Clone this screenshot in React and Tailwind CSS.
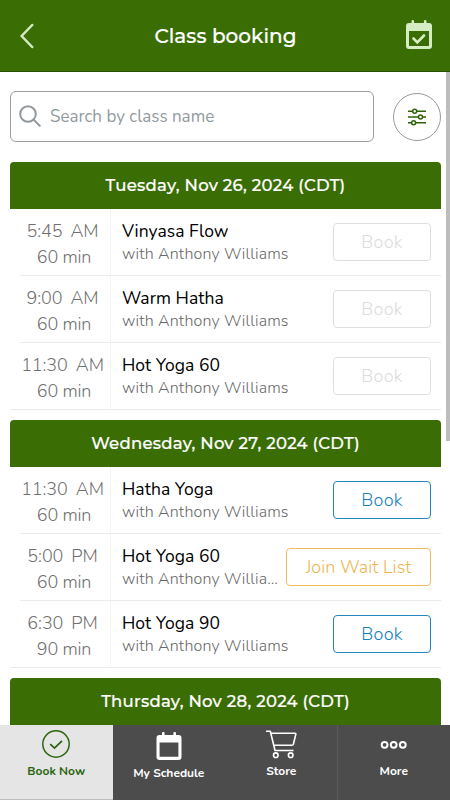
import React from "react";
import clsx from "clsx";

const days = [
  {
    date: "Tuesday, Nov 26, 2024 (CDT)",
    classes: [
      { time: "5:45", period: "AM", length: "60 min", name: "Vinyasa Flow", status: "closed" },
      { time: "9:00", period: "AM", length: "60 min", name: "Warm Hatha", status: "closed" },
      { time: "11:30", period: "AM", length: "60 min", name: "Hot Yoga 60", status: "closed" },
    ],
  },
  {
    date: "Wednesday, Nov 27, 2024 (CDT)",
    classes: [
      { time: "11:30", period: "AM", length: "60 min", name: "Hatha Yoga", status: "open" },
      { time: "5:00", period: "PM", length: "60 min", name: "Hot Yoga 60", status: "full" },
      { time: "6:30", period: "PM", length: "90 min", name: "Hot Yoga 90", status: "open" },
    ],
  },
  { date: "Thursday, Nov 28, 2024 (CDT)", classes: [] },
];

const buttonStyles = {
  closed: "w-[98px] border-[#dedede] text-[#dcdcdc]",
  open: "w-[98px] border-[#2187bd] text-[#1580bd]",
  full: "w-[145px] border-[#efbd62] text-[#edb552]",
};

const Header = () => {
  return (
    <header className="flex h-[72px] shrink-0 items-center justify-between border-b border-[#285000] bg-[#3a6e04] pl-5 pr-[18px] text-[#d6edc4]">
      <svg width="15" height="26" viewBox="0 0 15 26" fill="none" stroke="currentColor" strokeWidth="2.5" strokeLinecap="round" strokeLinejoin="round">
        <path d="M12.2 2 1.600 13l10.600 11" />
      </svg>
      <h1 className="ml-[10px] whitespace-nowrap font-['Montserrat','Inter',sans-serif] text-[20px] font-medium tracking-[0.05px] text-white [-webkit-text-stroke:0.2px_white]">
        Class booking
      </h1>
      <svg className="-mt-0.5" width="26" height="30" viewBox="0 0 26 30" fill="none">
        <path
          fill="currentColor"
          fillRule="evenodd"
          d="M5.500 1.400a1.300 1.300 0 0 1 2.600 0V3h9.800V1.400a1.300 1.300 0 0 1 2.600 0V3H23a3 3 0 0 1 3 3v20a3 3 0 0 1-3 3H3a3 3 0 0 1-3-3V6a3 3 0 0 1 3-3h2.500zM3 11v15h20V11z"
        />
        <path stroke="currentColor" strokeWidth="2.600" strokeLinecap="round" d="m7.500 18.500 3.800 3.800 6.700-6.800" />
      </svg>
    </header>
  );
};

const SearchBar = () => {
  return (
    <div className="flex items-center justify-between">
      <div className="flex h-[51px] w-[364px] items-center rounded-[6px] border border-[#9b9fa2] pl-2">
        <svg className="-mt-0.5" width="22" height="22" viewBox="0 0 22 22" fill="none" stroke="#92999e" strokeWidth="2" strokeLinecap="round">
          <circle cx="9" cy="9" r="7.800" />
          <path d="m14.700 14.700 6 6" />
        </svg>
        <span className="ml-[9px] text-[17px] text-[#929a9f]">Search by class name</span>
      </div>
      <button className="flex size-12 items-center justify-center rounded-full border border-[#96999b]">
        <svg width="18" height="18" viewBox="0 0 18 18" fill="none" stroke="#2f6108" strokeWidth="1.500">
          <path d="M0 3.300h4.600M8.800 3.300H18M0 9h10.400M14.600 9H18M0 14.700h3.500M7.700 14.700H18" />
          <circle cx="6.700" cy="3.300" r="2" />
          <circle cx="12.500" cy="9" r="2" />
          <circle cx="5.600" cy="14.700" r="2" />
        </svg>
      </button>
    </div>
  );
};

const ClassRow = ({ item, last }) => {
  return (
    <div className="flex h-[67px]">
      <div
        className={clsx(
          "flex shrink-0 flex-col items-center border-b border-r border-b-[#ebebeb] border-r-[#ececec] pt-[9px] text-[18px] font-light leading-[26px] tracking-[-0.1px] text-[#707070] [border-right-style:dotted]",
          last ? "w-[101px] pl-[5px]" : "ml-[10px] w-[91px] pr-[5px]"
        )}
      >
        <div className="flex gap-2 whitespace-nowrap">
          <span>{item.time}</span>
          <span>{item.period}</span>
        </div>
        <span className="ml-[3px] tracking-[-0.2px]">{item.length}</span>
      </div>
      <div className="flex min-w-0 grow items-start border-b border-[#ebebeb] pl-[11px] pr-[10px]">
        <div className="min-w-0 grow pt-[11px] leading-[23px]">
          <h3 className="truncate text-[17.500px] tracking-[0.05px] text-black">{item.name}</h3>
          <p className="truncate text-[16px] font-light tracking-[0.15px] text-[#686868]">with Anthony Williams</p>
        </div>
        <button
          className={clsx(
            "ml-[5px] mt-[14px] h-[38px] shrink-0 whitespace-nowrap rounded-[4px] border text-[18px] font-light",
            item.status === "full" ? "tracking-[0.05px]" : "tracking-[0.2px]",
            buttonStyles[item.status]
          )}
        >
          {item.status === "full" ? "Join Wait List" : "Book"}
        </button>
      </div>
    </div>
  );
};

const DaySection = ({ day }) => {
  return (
    <section>
      <h2 className="flex h-[47px] items-center justify-center whitespace-nowrap rounded-t-[4px] bg-[#3a6e04] font-['Montserrat','Inter',sans-serif] text-[16.500px] font-medium tracking-[0.25px] text-white [-webkit-text-stroke:0.2px_white]">
        {day.date}
      </h2>
      {day.classes.map((item, i) => (
        <ClassRow key={i} item={item} last={i === day.classes.length - 1} />
      ))}
    </section>
  );
};

const BottomNav = () => {
  return (
    <nav className="grid h-[75px] shrink-0 grid-cols-4 bg-[#4c4c4c] text-[12px] font-bold leading-4 text-white">
      <div className="flex flex-col items-center border-b border-[#bdbdbd] bg-[#e5e5e5] pt-[5px] text-[#2b6511]">
        <svg width="28" height="28" viewBox="0 0 28 28" fill="none" stroke="currentColor" strokeWidth="1.500">
          <circle cx="14" cy="14" r="13.200" />
          <path strokeWidth="1.800" d="m8.200 14.200 4.300 3.900 7.500-7.300" />
        </svg>
        <span className="mt-[5px]">Book Now</span>
      </div>
      <div className="flex flex-col items-center pt-[7px]">
        <svg width="26" height="29" viewBox="0 0 26 29">
          <path
            fill="currentColor"
            fillRule="evenodd"
            d="M6 1.200a1.300 1.300 0 0 1 2.600 0V3h8.800V1.200a1.300 1.300 0 0 1 2.600 0V3h2.500a3 3 0 0 1 3 3v19a3 3 0 0 1-3 3h-19a3 3 0 0 1-3-3V6a3 3 0 0 1 3-3H6zM3.600 10.500v14.200h18.800V10.500z"
          />
        </svg>
        <span className="mt-1">My Schedule</span>
      </div>
      <div className="flex flex-col items-center border-r border-[#5c5c5c] pt-[5px]">
        <svg className="ml-px" width="31" height="29" viewBox="0 0 31 29" fill="none" stroke="currentColor" strokeWidth="1.600" strokeLinejoin="round">
          <path d="M0 1.300h4.300l4 16.200M5 3.300h24q1 0 .8 1l-2.300 9.500q-.3 1.500-1.800 1.500H7.500M8.300 17.500l.7 3h18.500" />
          <circle cx="9.800" cy="25.200" r="2.300" />
          <circle cx="24.700" cy="25.200" r="2.300" />
        </svg>
        <span className="ml-px mt-1">Store</span>
      </div>
      <div className="flex flex-col items-center pt-[5px]">
        <svg width="28" height="28" viewBox="0 0 28 28" fill="none" stroke="currentColor" strokeWidth="2">
          <circle cx="4.600" cy="14.800" r="2.900" />
          <circle cx="13.700" cy="14.800" r="2.900" />
          <circle cx="22.800" cy="14.800" r="2.900" />
        </svg>
        <span className="mt-[5px]">More</span>
      </div>
    </nav>
  );
};

const App = () => {
  return (
    <div className="flex h-[800px] w-[450px] flex-col overflow-hidden bg-white font-['Nunito','Lato',sans-serif]">
      <Header />
      <main className="flex min-h-0 grow overflow-hidden">
        <div className="w-[446px] shrink-0 pl-[10px] pr-[5px] pt-[19px]">
          <SearchBar />
          <div className="mt-5 flex flex-col gap-[10px]">
            {days.map((day) => (
              <DaySection key={day.date} day={day} />
            ))}
          </div>
        </div>
        {/* Scrollbar */}
        <div className="h-[369px] w-1 bg-[#bdbdbd]" />
      </main>
      <BottomNav />
    </div>
  );
};

export default App;
